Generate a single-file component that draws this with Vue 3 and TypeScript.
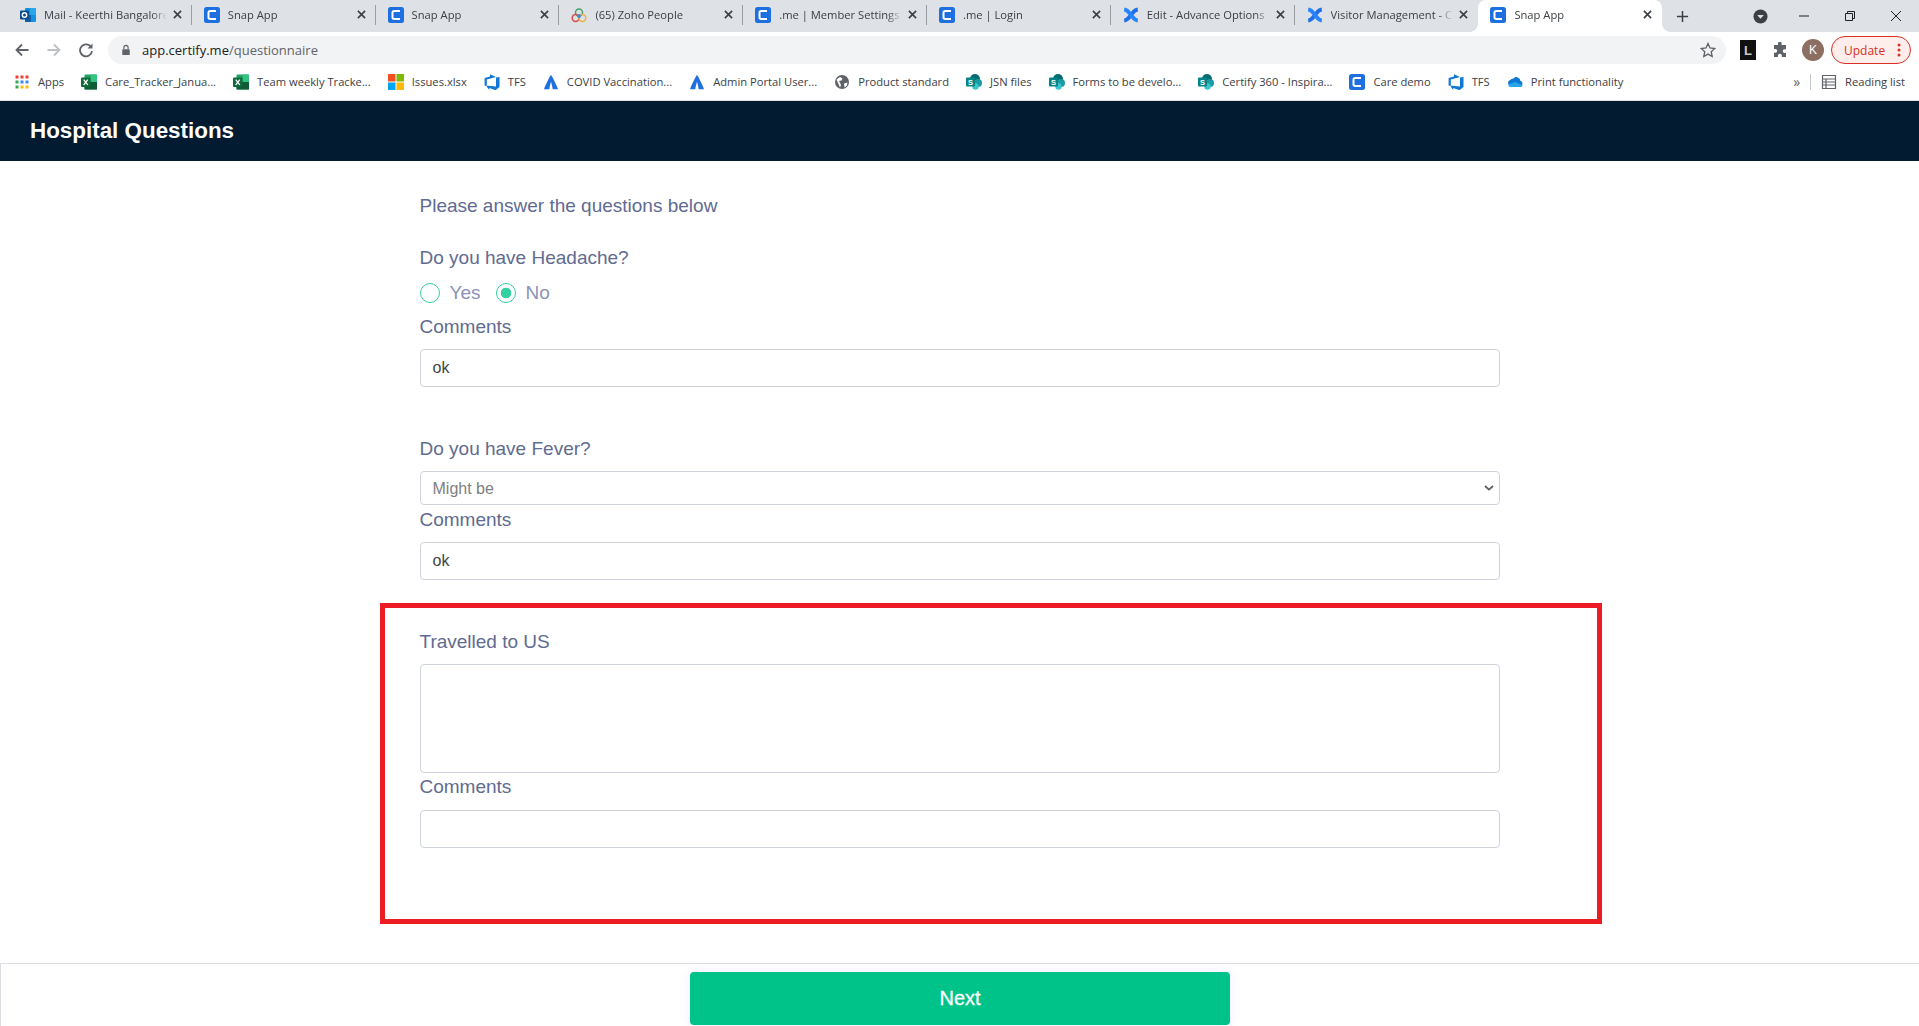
<script setup lang="ts">
const tabs = [
  { icon: 'outlook', title: 'Mail - Keerthi Bangalore' },
  { icon: 'certify', title: 'Snap App' },
  { icon: 'certify', title: 'Snap App' },
  { icon: 'zoho', title: '(65) Zoho People' },
  { icon: 'certify', title: '.me | Member Settings' },
  { icon: 'certify', title: '.me | Login' },
  { icon: 'confluence', title: 'Edit - Advance Options' },
  { icon: 'confluence', title: 'Visitor Management - Conf' },
  { icon: 'certify', title: 'Snap App', active: true },
]

const bookmarks = [
  { icon: 'apps', title: 'Apps' },
  { icon: 'excel', title: 'Care_Tracker_Janua...' },
  { icon: 'excel', title: 'Team weekly Tracke...' },
  { icon: 'ms', title: 'Issues.xlsx' },
  { icon: 'devops', title: 'TFS' },
  { icon: 'atlassian', title: 'COVID Vaccination...' },
  { icon: 'atlassian', title: 'Admin Portal User...' },
  { icon: 'globe', title: 'Product standard' },
  { icon: 'sharepoint', title: 'JSN files' },
  { icon: 'sharepoint', title: 'Forms to be develo...' },
  { icon: 'sharepoint', title: 'Certify 360 - Inspira...' },
  { icon: 'certify', title: 'Care demo' },
  { icon: 'devops', title: 'TFS' },
  { icon: 'onedrive', title: 'Print functionality' },
]
</script>

<template>
  <div class="page">
    <svg class="sprite" aria-hidden="true">
      <symbol id="i-certify" viewBox="0 0 16 16">
        <rect width="16" height="16" rx="2.5" fill="#1e6fe0" />
        <path d="M12 4H6.200Q4.500 4 4.500 5.700v4.600Q4.500 12 6.200 12H12" fill="none" stroke="#fff" stroke-width="2" />
      </symbol>
      <symbol id="i-outlook" viewBox="0 0 16 16">
        <rect x="5" y="1" width="11" height="14" rx="1" fill="#1490df" />
        <rect x="10" y="1" width="6" height="7" fill="#28a8ea" />
        <rect x="5" y="8" width="6" height="7" fill="#0f5fa8" />
        <rect y="3.500" width="9" height="9" rx="1" fill="#0a4c90" />
        <circle cx="4.500" cy="8" r="2.200" fill="none" stroke="#fff" stroke-width="1.400" />
      </symbol>
      <symbol id="i-zoho" viewBox="0 0 16 16">
        <circle cx="8" cy="5.500" r="3.500" fill="none" stroke="#4b9e6a" stroke-width="1.500" />
        <circle cx="4.600" cy="11" r="3.400" fill="none" stroke="#dd4b4b" stroke-width="1.500" />
        <circle cx="11.400" cy="11" r="3.400" fill="none" stroke="#e9b33c" stroke-width="1.500" />
        <circle cx="8" cy="9" r="2" fill="#4a88c7" />
      </symbol>
      <symbol id="i-confluence" viewBox="0 0 16 16">
        <path d="M14.800 2.500C11.500 2.800 10.500 5 8 8s-3.500 5.200-6.800 5.500" fill="none" stroke="#1f6fe8" stroke-width="4" />
        <path d="M1.200 2.500C4.500 2.800 5.500 5 8 8s3.500 5.200 6.800 5.500" fill="none" stroke="#2684ff" stroke-width="4" />
      </symbol>
      <symbol id="i-apps" viewBox="0 0 16 16">
        <rect x="1.500" y="1.500" width="3" height="3" fill="#ea4335" />
        <rect x="6.500" y="1.500" width="3" height="3" fill="#ea4335" />
        <rect x="11.500" y="1.500" width="3" height="3" fill="#ea4335" />
        <rect x="1.500" y="6.500" width="3" height="3" fill="#34a853" />
        <rect x="6.500" y="6.500" width="3" height="3" fill="#4285f4" />
        <rect x="11.500" y="6.500" width="3" height="3" fill="#4285f4" />
        <rect x="1.500" y="11.500" width="3" height="3" fill="#34a853" />
        <rect x="6.500" y="11.500" width="3" height="3" fill="#fbbc05" />
        <rect x="11.500" y="11.500" width="3" height="3" fill="#fbbc05" />
      </symbol>
      <symbol id="i-excel" viewBox="0 0 16 16">
        <rect x="3.500" y="0.500" width="12.500" height="15" rx="1" fill="#21a366" />
        <rect x="3.500" y="8" width="12.500" height="7.500" fill="#0f5c36" />
        <rect x="9.800" y="0.500" width="6.200" height="7.500" fill="#33c481" />
        <rect y="3.500" width="9.500" height="9.500" rx="1" fill="#0e6b3a" />
        <path d="M2.700 5.600 6.800 10.900M6.800 5.600 2.700 10.900" stroke="#fff" stroke-width="1.300" />
      </symbol>
      <symbol id="i-ms" viewBox="0 0 16 16">
        <rect width="7.500" height="7.500" fill="#f25022" />
        <rect x="8.500" width="7.500" height="7.500" fill="#7fba00" />
        <rect y="8.500" width="7.500" height="7.500" fill="#00a4ef" />
        <rect x="8.500" y="8.500" width="7.500" height="7.500" fill="#ffb900" />
      </symbol>
      <symbol id="i-devops" viewBox="0 0 16 16">
        <path d="M15.500 3v10l-4 3.200-6.200-2.200v2.100L1.800 11.600l10.200.8V3.600ZM12 3 6 .2v2.200L.6 4v7.600l2.200 1V5.500Z" fill="#0f78d4" />
      </symbol>
      <symbol id="i-atlassian" viewBox="0 0 16 16">
        <path d="M8 .8c1.700 2.600 5 9 7 14.400H9.700C9.300 12 8.300 9 8 7.500 7.700 9 6.700 12 6.300 15.200H1C3 9.800 6.300 3.400 8 .8Z" fill="#1f6fe0" />
      </symbol>
      <symbol id="i-globe" viewBox="0 0 16 16">
        <circle cx="8" cy="8" r="7" fill="#5f6368" />
        <path d="M2.500 5.500 6 3l2.500 1.500-1 2L5 7l2 4-1 2.500ZM10 9.500l3.500-1-.5 3-2.500 2Z" fill="#fff" />
      </symbol>
      <symbol id="i-sharepoint" viewBox="0 0 16 16">
        <circle cx="9" cy="5" r="5" fill="#036c70" />
        <circle cx="12" cy="9" r="4" fill="#1a9ba1" />
        <circle cx="9.500" cy="12.500" r="3.200" fill="#37c6d0" />
        <rect y="3.500" width="9" height="9" rx="1" fill="#038387" />
        <text x="4.500" y="10.700" font-size="7.500" font-weight="700" fill="#fff" text-anchor="middle" font-family="Liberation Sans">S</text>
      </symbol>
      <symbol id="i-onedrive" viewBox="0 0 16 16">
        <path d="M6.500 4.500a4 4 0 0 1 7 2.600A2.500 2.500 0 0 1 13.500 12H4a3 3 0 0 1-.7-5.900 3.600 3.600 0 0 1 3.200-1.600Z" fill="#0f78d4" />
        <path d="M1 10.500A3 3 0 0 0 4 13h9.500a2.500 2.500 0 0 0 2.300-1.600L8 8Z" fill="#28a8ea" />
      </symbol>
    </svg>

    <div class="tabstrip">
      <div v-for="(tab, i) in tabs" :key="i" class="tab" :class="{ active: tab.active }">
        <svg class="favicon"><use :href="`#i-${tab.icon}`" /></svg>
        <span class="tab-title">{{ tab.title }}</span>
        <svg class="tab-close" viewBox="0 0 10 10">
          <path d="M1 1l8 8M9 1 1 9" stroke="#3c4043" stroke-width="1.800" />
        </svg>
        <span v-if="i < tabs.length - 2" class="tab-sep"></span>
      </div>
      <svg class="new-tab" viewBox="0 0 14 14">
        <path d="M7 1v12M1 7h12" stroke="#3c4043" stroke-width="1.600" />
      </svg>
      <div class="spacer"></div>
      <svg class="tab-search" viewBox="0 0 16 16">
        <circle cx="8" cy="8" r="7.500" fill="#3c4043" />
        <path d="M4.500 6.500h7L8 10.500Z" fill="#dee1e6" />
      </svg>
      <div class="win-controls">
        <svg viewBox="0 0 12 12"><path d="M1 6h10" stroke="#202124" /></svg>
        <svg viewBox="0 0 12 12"><path d="M1.500 3.500h7v7h-7ZM3.500 3.500v-2h7v7h-2" fill="none" stroke="#202124" /></svg>
        <svg viewBox="0 0 12 12"><path d="M1 1l10 10M11 1 1 11" stroke="#202124" /></svg>
      </div>
    </div>

    <div class="toolbar">
      <svg class="nav" viewBox="0 0 16 16"><path d="M14.500 8H2.500M8 2.500 2.500 8 8 13.500" fill="none" stroke="#5f6368" stroke-width="1.800" /></svg>
      <svg class="nav" viewBox="0 0 16 16"><path d="M1.500 8h12M8 2.500 13.500 8 8 13.500" fill="none" stroke="#bdc1c6" stroke-width="1.800" /></svg>
      <svg class="nav" viewBox="0 0 16 16"><path d="M13.300 5.500A6 6 0 1 0 14 9" fill="none" stroke="#5f6368" stroke-width="1.800" /><path d="M14.500 1.500v5h-5Z" fill="#5f6368" /></svg>
      <div class="omnibox">
        <svg class="lock" viewBox="0 0 12 14"><path d="M3.500 6V4a2.500 2.500 0 0 1 5 0v2" fill="none" stroke="#5f6368" stroke-width="1.400" /><rect x="1.500" y="6" width="9" height="7" rx="1" fill="#5f6368" /></svg>
        <span class="url">app.certify.me<span class="url-path">/questionnaire</span></span>
        <svg class="star" viewBox="0 0 16 16"><path d="M8 1.500l2 4.500 4.800.5-3.600 3.200 1 4.800L8 12.100l-4.200 2.400 1-4.800L1.200 6.500 6 6Z" fill="none" stroke="#5f6368" stroke-width="1.300" /></svg>
      </div>
      <div class="ext-black"><span>L</span></div>
      <svg class="puzzle" viewBox="0 0 16 16"><path d="M6 1.500a1.800 1.800 0 0 1 3.600 0V3H14v4.200h-1.400a1.900 1.900 0 0 0 0 3.800H14V15H9.800v-1.400a1.900 1.900 0 0 0-3.800 0V15H2v-4.300h1.300a1.900 1.900 0 0 0 0-3.800H2V3h4Z" fill="#5f6368" /></svg>
      <div class="avatar">K</div>
      <div class="update">
        <span>Update</span>
        <svg viewBox="0 0 4 16"><circle cx="2" cy="3" r="1.500" fill="#d93025" /><circle cx="2" cy="8" r="1.500" fill="#d93025" /><circle cx="2" cy="13" r="1.500" fill="#d93025" /></svg>
      </div>
    </div>

    <div class="bookmarks">
      <div v-for="(b, i) in bookmarks" :key="i" class="bookmark">
        <svg class="favicon"><use :href="`#i-${b.icon}`" /></svg>
        <span>{{ b.title }}</span>
      </div>
      <div class="spacer"></div>
      <span class="more">»</span>
      <div class="bm-divider"></div>
      <div class="bookmark reading">
        <svg class="favicon" viewBox="0 0 16 16"><path d="M1.500 1.500h13v13h-13ZM1.500 5h13M1.500 8h13M1.500 11h13M5 5v9.500" fill="none" stroke="#5f6368" stroke-width="1.200" /></svg>
        <span>Reading list</span>
      </div>
    </div>

    <header class="app-header">Hospital Questions</header>

    <main class="form">
      <p class="intro">Please answer the questions below</p>

      <section class="question first">
        <label class="q-label">Do you have Headache?</label>
        <div class="radios">
          <span class="radio"></span><span class="radio-text">Yes</span>
          <span class="radio checked"></span><span class="radio-text">No</span>
        </div>
        <label class="q-label comment">Comments</label>
        <div class="field input">ok</div>
      </section>

      <section class="question second">
        <label class="q-label">Do you have Fever?</label>
        <div class="field select">
          <span>Might be</span>
          <svg viewBox="0 0 10 6"><path d="M1 1l4 3.600L9 1" fill="none" stroke="#5a5f66" stroke-width="1.800" /></svg>
        </div>
        <label class="q-label comment tight">Comments</label>
        <div class="field input">ok</div>
      </section>

      <section class="question third">
        <label class="q-label">Travelled to US</label>
        <div class="field area"></div>
        <label class="q-label comment tight last">Comments</label>
        <div class="field input"></div>
      </section>

      <div class="highlight"></div>
    </main>

    <footer class="footer">
      <button class="next">Next</button>
    </footer>
  </div>
</template>

<style scoped>
.page {
  position: relative;
  width: 1919px;
  height: 1026px;
  overflow: hidden;
  background: #fff;
  font-family: "Liberation Sans", Arial, sans-serif;
}

.sprite {
  position: absolute;
  width: 0;
  height: 0;
}

.spacer {
  flex: 1;
}

.favicon {
  width: 16px;
  height: 16px;
  flex: none;
}

/* browser chrome */
.tabstrip {
  display: flex;
  align-items: center;
  height: 32px;
  padding-left: 8px;
  background: #dee1e6;
  font-family: "Open Sans", sans-serif;
  font-size: 11.2px;
  color: #3c4043;
}

.tab {
  position: relative;
  display: flex;
  align-items: center;
  width: 183.8px;
  height: 32px;
  padding: 0 10px 3px 12px;
  box-sizing: border-box;
}

.tab-sep {
  position: absolute;
  top: 5px;
  right: 0;
  width: 1px;
  height: 20px;
  background: #9a9da2;
}

.tab.active {
  background: #fff;
  border-radius: 8px 8px 0 0;
}

.tab.active::before,
.tab.active::after {
  content: "";
  position: absolute;
  bottom: 0;
  width: 8px;
  height: 8px;
}

.tab.active::before {
  left: -8px;
  background: radial-gradient(circle at 0 0, #dee1e6 7.5px, #fff 8px);
}

.tab.active::after {
  right: -8px;
  background: radial-gradient(circle at 100% 0, #dee1e6 7.5px, #fff 8px);
}

.tab-title {
  flex: 1;
  min-width: 0;
  margin-left: 8px;
  white-space: nowrap;
  overflow: hidden;
  -webkit-mask-image: linear-gradient(to right, #000 88%, transparent);
  mask-image: linear-gradient(to right, #000 88%, transparent);
}

.tab-close {
  width: 9px;
  height: 9px;
  margin-left: 6px;
  flex: none;
}

.new-tab {
  width: 13px;
  height: 13px;
  margin-left: 14px;
}

.tab-search {
  width: 15px;
  height: 15px;
  margin-right: 30px;
}

.win-controls {
  display: flex;
  gap: 34px;
  margin-right: 17px;
}

.win-controls svg {
  width: 12px;
  height: 12px;
}

.toolbar {
  display: flex;
  align-items: center;
  height: 36px;
  padding: 0 7px 0 14px;
  box-sizing: border-box;
  background: #fff;
}

.nav {
  width: 16px;
  height: 16px;
  margin-right: 16px;
  flex: none;
}

.omnibox {
  display: flex;
  align-items: center;
  width: 1618px;
  height: 28px;
  margin-left: -2px;
  padding: 0 10px 0 13px;
  box-sizing: border-box;
  border-radius: 14px;
  background: #f1f3f4;
  font-family: "Open Sans", sans-serif;
  font-size: 13px;
  color: #202124;
}

.lock {
  width: 10px;
  height: 12px;
  margin-right: 11px;
}

.url {
  flex: 1;
}

.url-path {
  color: #5f6368;
}

.star {
  width: 16px;
  height: 16px;
}

.ext-black {
  display: flex;
  align-items: center;
  justify-content: center;
  width: 16px;
  height: 20px;
  margin-left: 14px;
  background: #111;
  color: #c8c8c8;
  font-size: 13px;
  font-weight: 700;
}

.puzzle {
  width: 16px;
  height: 16px;
  margin-left: 16px;
}

.avatar {
  display: flex;
  align-items: center;
  justify-content: center;
  width: 22px;
  height: 22px;
  margin-left: 14px;
  border-radius: 50%;
  background: #8d6e63;
  color: #fff;
  font-size: 12px;
}

.update {
  display: flex;
  align-items: center;
  gap: 12px;
  height: 28px;
  margin-left: 7px;
  padding: 0 9px 0 12px;
  box-sizing: border-box;
  border: 1px solid #d93025;
  border-radius: 14px;
  background: #fdeeec;
  color: #d93025;
  font-family: "Open Sans", sans-serif;
  font-size: 12px;
}

.update svg {
  width: 4px;
  height: 16px;
}

.bookmarks {
  display: flex;
  align-items: center;
  gap: 17px;
  height: 33px;
  padding: 0 14px 5px;
  box-sizing: border-box;
  border-bottom: 1px solid #dfe1e5;
  font-family: "Open Sans", sans-serif;
  font-size: 11.2px;
  color: #3c4043;
}

.bookmark {
  display: flex;
  align-items: center;
  gap: 8px;
  white-space: nowrap;
}

.more {
  font-size: 14px;
  color: #5f6368;
}

.bm-divider {
  width: 1px;
  height: 16px;
  margin: 0 -7px;
  background: #c4c7cb;
}

/* app */
.app-header {
  display: flex;
  align-items: center;
  height: 60px;
  padding-left: 30px;
  background: #031b30;
  color: #fff;
  font-size: 22.4px;
  font-weight: 700;
}

.form {
  position: relative;
  width: 1080px;
  height: 802px;
  margin: 0 auto;
  color: #5f6b91;
  font-size: 19px;
  line-height: 24px;
}

.intro {
  margin: 0;
  padding-top: 33px;
}

.q-label {
  display: block;
}

.question.first {
  margin-top: 28px;
}

.question.second {
  margin-top: 50px;
}

.question.third {
  margin-top: 50px;
}

.radios {
  display: flex;
  align-items: center;
  height: 20px;
  margin-top: 13px;
}

.radio {
  width: 20px;
  height: 20px;
  box-sizing: border-box;
  border: 1px solid #34d0a0;
  border-radius: 50%;
}

.radio.checked {
  background: radial-gradient(circle, #34d0a0 0 5px, #fff 5.6px);
}

.radio-text {
  margin: 0 15px 0 10px;
  color: #8b92b5;
}

.comment {
  margin-top: 12px;
  margin-bottom: 10px;
}

.comment.tight {
  margin-top: 3px;
  margin-bottom: 10px;
}

.comment.last {
  margin-top: 2px;
  margin-bottom: 11px;
}

.field {
  display: flex;
  align-items: center;
  box-sizing: border-box;
  border: 1px solid #ced2da;
  border-radius: 4px;
  background: #fff;
}

.input {
  height: 38px;
  padding: 0 12px;
  color: #444;
  font-size: 16px;
}

.select {
  justify-content: space-between;
  height: 34px;
  margin-top: 10px;
  padding: 0 5px 0 12px;
  color: #808080;
  font-size: 16px;
}

.select span {
  padding-top: 2px;
}

.select svg {
  width: 10px;
  height: 6px;
}

.area {
  height: 109px;
  margin-top: 10px;
}

.highlight {
  position: absolute;
  top: 442px;
  left: -40px;
  width: 1222px;
  height: 321px;
  box-sizing: border-box;
  border: 5px solid #ed1c24;
}

.footer {
  display: flex;
  justify-content: center;
  height: 63px;
  padding-top: 8px;
  box-sizing: border-box;
  border-top: 1px solid #dcdde2;
  border-left: 1px solid #dcdde2;
}

.next {
  width: 540px;
  height: 53px;
  border: none;
  border-radius: 4px;
  background: #00c389;
  color: #fff;
  font-family: inherit;
  font-size: 20px;
  font-weight: 400;
  -webkit-text-stroke: 0.3px #fff;
  box-shadow: 0 0 12px rgba(190, 200, 255, 0.3);
}
</style>
